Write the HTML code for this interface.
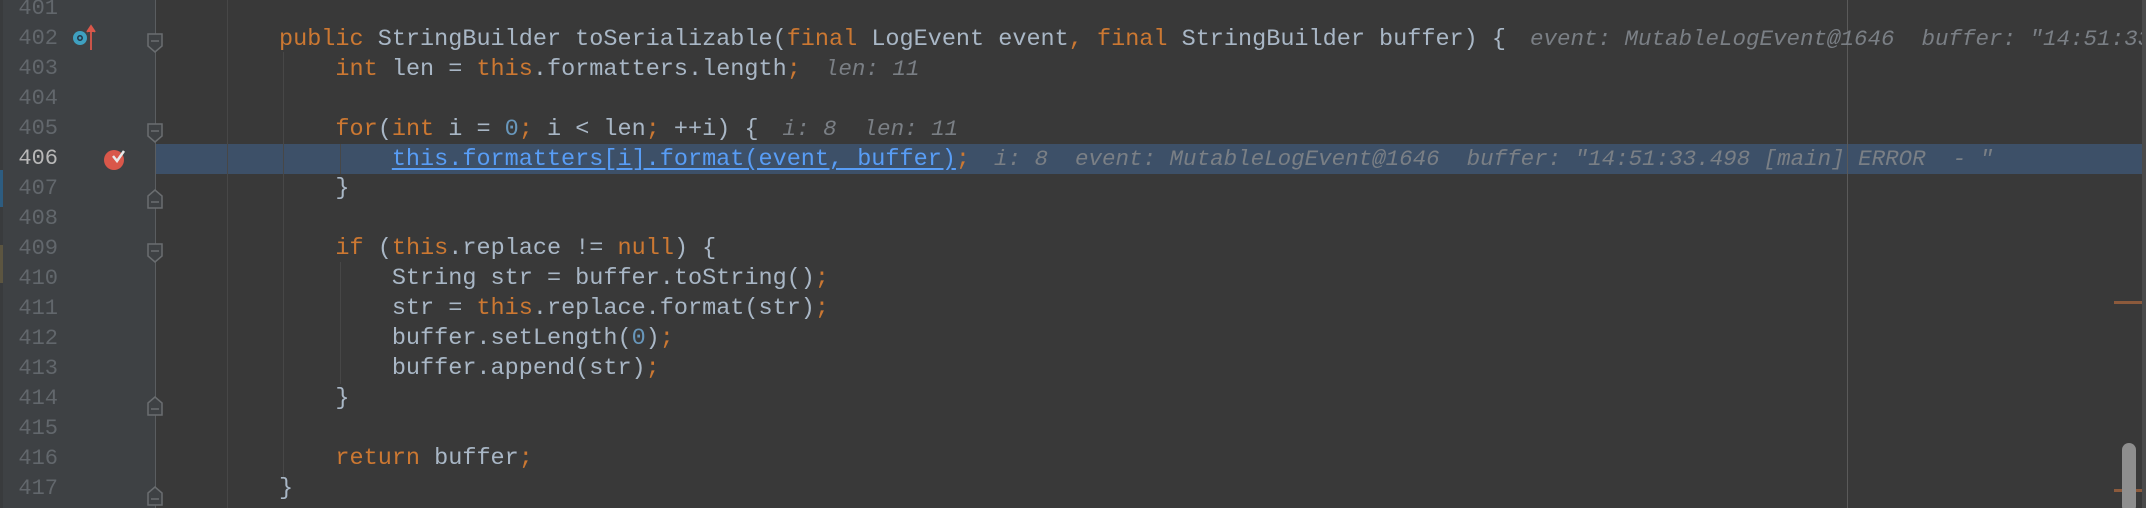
<!DOCTYPE html>
<html><head><meta charset="utf-8"><style>
html,body{margin:0;padding:0;width:2146px;height:508px;overflow:hidden;background:#393939;position:relative;}
.wrap{position:absolute;left:0;top:0;width:2142px;height:508px;overflow:hidden;}
.g{position:absolute;left:0;top:0;width:155px;height:508px;background:#3e4144;}
.strip{position:absolute;left:0;top:0;width:3px;height:508px;background:#393b3d;}
.vl{position:absolute;top:0;height:508px;width:1px;}
.ln{position:absolute;left:0;width:58px;text-align:right;font:22px/30px "Liberation Mono",monospace;color:#62676c;}
.row{position:absolute;left:279px;height:30px;white-space:pre;font:23.5px/30px "Liberation Mono",monospace;color:#a9b7c6;}
.k{color:#cc7832}.n{color:#6897bb}
.h{font-style:italic;color:#7a7f85;font-size:22.5px;margin-left:24px;}
.u{color:#589df6;text-decoration:underline;text-underline-offset:3px}
</style></head><body>
<div class="wrap">
<div class="g"></div><div class="strip"></div>
<div style="position:absolute;left:0;top:170px;width:3px;height:37px;background:#2d5c80"></div>
<div style="position:absolute;left:0;top:245px;width:3px;height:38px;background:#5c5540"></div>
<div style="position:absolute;left:155px;top:144px;width:1991px;height:30px;background:#3d5068"></div>
<div class="vl" style="left:155px;background:#5a5d60"></div>
<div class="vl" style="left:227px;background:#474747"></div>
<div class="vl" style="left:283px;top:52px;height:425px;background:#474747"></div>
<div class="vl" style="left:340px;top:144px;height:30px;background:#474747"></div>
<div class="vl" style="left:340px;top:262px;height:122px;background:#474747"></div>
<div class="vl" style="left:1847px;background:#5a5a5a"></div>
<div style="position:absolute;left:2114px;top:301px;width:28px;height:3px;background:#8c5a3c"></div>
<div style="position:absolute;left:2114px;top:489px;width:28px;height:3px;background:#8c5a3c"></div>
<div style="position:absolute;left:2122px;top:443px;width:14px;height:70px;border-radius:7px;background:#8e8e8e"></div>

<div class="ln" style="top:-6px">401</div>
<div class="ln" style="top:24px">402</div>
<div class="ln" style="top:54px">403</div>
<div class="ln" style="top:84px">404</div>
<div class="ln" style="top:114px">405</div>
<div class="ln" style="top:144px;color:#b8b8b8">406</div>
<div class="ln" style="top:174px">407</div>
<div class="ln" style="top:204px">408</div>
<div class="ln" style="top:234px">409</div>
<div class="ln" style="top:264px">410</div>
<div class="ln" style="top:294px">411</div>
<div class="ln" style="top:324px">412</div>
<div class="ln" style="top:354px">413</div>
<div class="ln" style="top:384px">414</div>
<div class="ln" style="top:414px">415</div>
<div class="ln" style="top:444px">416</div>
<div class="ln" style="top:474px">417</div>

<svg style="position:absolute;left:0;top:0" width="170" height="508">
<circle cx="80" cy="38" r="7" fill="#3fa0c0"/><circle cx="80" cy="38" r="2.2" fill="none" stroke="#234" stroke-width="1.5"/>
<path d="M91 50V28M87 32L91 26L95 32" stroke="#d9574a" stroke-width="1.8" fill="#d9574a"/>
<circle cx="114" cy="160" r="10" fill="#d9574a"/>
<path d="M113 156L117 161L124 151" stroke="#e8e8e8" stroke-width="2.5" fill="none"/>
<g fill="#3e4144" stroke="#6a6d70" stroke-width="1.5">
<path d="M148 34h14v12l-7 6l-7-6z"/><path d="M148 124h14v12l-7 6l-7-6z"/>
<path d="M148 196l7-6l7 6v12h-14z"/><path d="M148 244h14v12l-7 6l-7-6z"/>
<path d="M148 403l7-6l7 6v12h-14z"/><path d="M148 493l7-6l7 6v12h-14z"/>
</g>
<g stroke="#6a6d70" stroke-width="1.5"><path d="M151 41h8M151 131h8M151 202h8M151 251h8M151 409h8M151 499h8"/></g>
</svg>

<div class="row" style="top:24px"><span class="k">public</span> StringBuilder toSerializable(<span class="k">final</span> LogEvent event<span class="k">,</span> <span class="k">final</span> StringBuilder buffer) {<span class="h">event: MutableLogEvent@1646  buffer: "14:51:33</span></div>
<div class="row" style="top:54px">    <span class="k">int</span> len = <span class="k">this</span>.formatters.length<span class="k">;</span><span class="h">len: 11</span></div>
<div class="row" style="top:114px">    <span class="k">for</span>(<span class="k">int</span> i = <span class="n">0</span><span class="k">;</span> i &lt; len<span class="k">;</span> ++i) {<span class="h">i: 8  len: 11</span></div>
<div class="row" style="top:144px">        <span class="u">this.formatters[i].format(event, buffer)</span><span class="k">;</span><span class="h">i: 8  event: MutableLogEvent@1646  buffer: "14:51:33.498 [main] ERROR  - "</span></div>
<div class="row" style="top:174px">    }</div>
<div class="row" style="top:234px">    <span class="k">if</span> (<span class="k">this</span>.replace != <span class="k">null</span>) {</div>
<div class="row" style="top:264px">        String str = buffer.toString()<span class="k">;</span></div>
<div class="row" style="top:294px">        str = <span class="k">this</span>.replace.format(str)<span class="k">;</span></div>
<div class="row" style="top:324px">        buffer.setLength(<span class="n">0</span>)<span class="k">;</span></div>
<div class="row" style="top:354px">        buffer.append(str)<span class="k">;</span></div>
<div class="row" style="top:384px">    }</div>
<div class="row" style="top:444px">    <span class="k">return</span> buffer<span class="k">;</span></div>
<div class="row" style="top:474px">}</div>
</div>
<div style="position:absolute;left:2142px;top:0;width:4px;height:508px;background:#4a4a4a"></div>
</body></html>
